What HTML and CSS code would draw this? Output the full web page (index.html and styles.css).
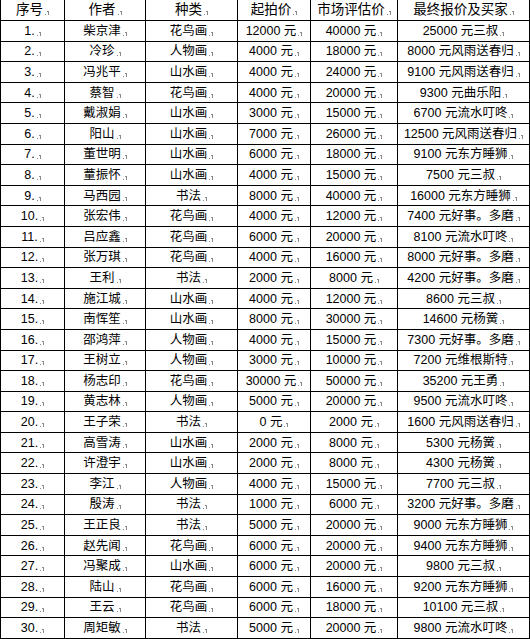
FILE: index.html
```html
<!DOCTYPE html>
<html lang="zh">
<head>
<meta charset="utf-8">
<title>拍卖结果</title>
<link rel="stylesheet" href="styles.css">
</head>
<body>
<div class="sheet">
<div class="cell head">序号<i class="pm"></i></div><div class="cell head">作者<i class="pm"></i></div><div class="cell head">种类<i class="pm"></i></div><div class="cell head">起拍价<i class="pm"></i></div><div class="cell head">市场评估价<i class="pm"></i></div><div class="cell head">最终报价及买家<i class="pm"></i></div>
<div class="cell">1.<i class="pm"></i></div><div class="cell">柴京津<i class="pm"></i></div><div class="cell">花鸟画<i class="pm"></i></div><div class="cell">12000 元<i class="pm"></i></div><div class="cell">40000 元<i class="pm"></i></div><div class="cell">25000 元三叔<i class="pm"></i></div>
<div class="cell">2.<i class="pm"></i></div><div class="cell">冷珍<i class="pm"></i></div><div class="cell">人物画<i class="pm"></i></div><div class="cell">4000 元<i class="pm"></i></div><div class="cell">18000 元<i class="pm"></i></div><div class="cell">8000 元风雨送春归<i class="pm"></i></div>
<div class="cell">3.<i class="pm"></i></div><div class="cell">冯兆平<i class="pm"></i></div><div class="cell">山水画<i class="pm"></i></div><div class="cell">4000 元<i class="pm"></i></div><div class="cell">24000 元<i class="pm"></i></div><div class="cell">9100 元风雨送春归<i class="pm"></i></div>
<div class="cell">4.<i class="pm"></i></div><div class="cell">蔡智<i class="pm"></i></div><div class="cell">花鸟画<i class="pm"></i></div><div class="cell">4000 元<i class="pm"></i></div><div class="cell">20000 元<i class="pm"></i></div><div class="cell">9300 元曲乐阳<i class="pm"></i></div>
<div class="cell">5.<i class="pm"></i></div><div class="cell">戴淑娟<i class="pm"></i></div><div class="cell">山水画<i class="pm"></i></div><div class="cell">3000 元<i class="pm"></i></div><div class="cell">15000 元<i class="pm"></i></div><div class="cell">6700 元流水叮咚<i class="pm"></i></div>
<div class="cell">6.<i class="pm"></i></div><div class="cell">阳山<i class="pm"></i></div><div class="cell">山水画<i class="pm"></i></div><div class="cell">7000 元<i class="pm"></i></div><div class="cell">26000 元<i class="pm"></i></div><div class="cell">12500 元风雨送春归<i class="pm"></i></div>
<div class="cell">7.<i class="pm"></i></div><div class="cell">董世明<i class="pm"></i></div><div class="cell">山水画<i class="pm"></i></div><div class="cell">6000 元<i class="pm"></i></div><div class="cell">18000 元<i class="pm"></i></div><div class="cell">9100 元东方睡狮<i class="pm"></i></div>
<div class="cell">8.<i class="pm"></i></div><div class="cell">蕫振怀<i class="pm"></i></div><div class="cell">山水画<i class="pm"></i></div><div class="cell">4000 元<i class="pm"></i></div><div class="cell">15000 元<i class="pm"></i></div><div class="cell">7500 元三叔<i class="pm"></i></div>
<div class="cell">9.<i class="pm"></i></div><div class="cell">马西园<i class="pm"></i></div><div class="cell">书法<i class="pm"></i></div><div class="cell">8000 元<i class="pm"></i></div><div class="cell">40000 元<i class="pm"></i></div><div class="cell">16000 元东方睡狮<i class="pm"></i></div>
<div class="cell">10.<i class="pm"></i></div><div class="cell">张宏伟<i class="pm"></i></div><div class="cell">花鸟画<i class="pm"></i></div><div class="cell">4000 元<i class="pm"></i></div><div class="cell">12000 元<i class="pm"></i></div><div class="cell">7400 元好事。多磨<i class="pm"></i></div>
<div class="cell">11.<i class="pm"></i></div><div class="cell">吕应鑫<i class="pm"></i></div><div class="cell">花鸟画<i class="pm"></i></div><div class="cell">6000 元<i class="pm"></i></div><div class="cell">20000 元<i class="pm"></i></div><div class="cell">8100 元流水叮咚<i class="pm"></i></div>
<div class="cell">12.<i class="pm"></i></div><div class="cell">张万琪<i class="pm"></i></div><div class="cell">花鸟画<i class="pm"></i></div><div class="cell">4000 元<i class="pm"></i></div><div class="cell">16000 元<i class="pm"></i></div><div class="cell">8000 元好事。多磨<i class="pm"></i></div>
<div class="cell">13.<i class="pm"></i></div><div class="cell">王利<i class="pm"></i></div><div class="cell">书法<i class="pm"></i></div><div class="cell">2000 元<i class="pm"></i></div><div class="cell">8000 元<i class="pm"></i></div><div class="cell">4200 元好事。多磨<i class="pm"></i></div>
<div class="cell">14.<i class="pm"></i></div><div class="cell">施江城<i class="pm"></i></div><div class="cell">山水画<i class="pm"></i></div><div class="cell">4000 元<i class="pm"></i></div><div class="cell">12000 元<i class="pm"></i></div><div class="cell">8600 元三叔<i class="pm"></i></div>
<div class="cell">15.<i class="pm"></i></div><div class="cell">南恽笙<i class="pm"></i></div><div class="cell">山水画<i class="pm"></i></div><div class="cell">8000 元<i class="pm"></i></div><div class="cell">30000 元<i class="pm"></i></div><div class="cell">14600 元杨黉<i class="pm"></i></div>
<div class="cell">16.<i class="pm"></i></div><div class="cell">邵鸿萍<i class="pm"></i></div><div class="cell">人物画<i class="pm"></i></div><div class="cell">4000 元<i class="pm"></i></div><div class="cell">15000 元<i class="pm"></i></div><div class="cell">7300 元好事。多磨<i class="pm"></i></div>
<div class="cell">17.<i class="pm"></i></div><div class="cell">王树立<i class="pm"></i></div><div class="cell">人物画<i class="pm"></i></div><div class="cell">3000 元<i class="pm"></i></div><div class="cell">10000 元<i class="pm"></i></div><div class="cell">7200 元维根斯特<i class="pm"></i></div>
<div class="cell">18.<i class="pm"></i></div><div class="cell">杨志印<i class="pm"></i></div><div class="cell">花鸟画<i class="pm"></i></div><div class="cell">30000 元<i class="pm"></i></div><div class="cell">50000 元<i class="pm"></i></div><div class="cell">35200 元王勇<i class="pm"></i></div>
<div class="cell">19.<i class="pm"></i></div><div class="cell">黄志林<i class="pm"></i></div><div class="cell">人物画<i class="pm"></i></div><div class="cell">5000 元<i class="pm"></i></div><div class="cell">20000 元<i class="pm"></i></div><div class="cell">9500 元流水叮咚<i class="pm"></i></div>
<div class="cell">20.<i class="pm"></i></div><div class="cell">王子荣<i class="pm"></i></div><div class="cell">书法<i class="pm"></i></div><div class="cell">0 元<i class="pm"></i></div><div class="cell">2000 元<i class="pm"></i></div><div class="cell">1600 元风雨送春归<i class="pm"></i></div>
<div class="cell">21.<i class="pm"></i></div><div class="cell">高雪涛<i class="pm"></i></div><div class="cell">山水画<i class="pm"></i></div><div class="cell">2000 元<i class="pm"></i></div><div class="cell">8000 元<i class="pm"></i></div><div class="cell">5300 元杨黉<i class="pm"></i></div>
<div class="cell">22.<i class="pm"></i></div><div class="cell">许澄宇<i class="pm"></i></div><div class="cell">山水画<i class="pm"></i></div><div class="cell">2000 元<i class="pm"></i></div><div class="cell">8000 元<i class="pm"></i></div><div class="cell">4300 元杨黉<i class="pm"></i></div>
<div class="cell">23.<i class="pm"></i></div><div class="cell">李江<i class="pm"></i></div><div class="cell">人物画<i class="pm"></i></div><div class="cell">4000 元<i class="pm"></i></div><div class="cell">15000 元<i class="pm"></i></div><div class="cell">7700 元三叔<i class="pm"></i></div>
<div class="cell">24.<i class="pm"></i></div><div class="cell">殷涛<i class="pm"></i></div><div class="cell">书法<i class="pm"></i></div><div class="cell">1000 元<i class="pm"></i></div><div class="cell">6000 元<i class="pm"></i></div><div class="cell">3200 元好事。多磨<i class="pm"></i></div>
<div class="cell">25.<i class="pm"></i></div><div class="cell">王正良<i class="pm"></i></div><div class="cell">书法<i class="pm"></i></div><div class="cell">5000 元<i class="pm"></i></div><div class="cell">20000 元<i class="pm"></i></div><div class="cell">9000 元东方睡狮<i class="pm"></i></div>
<div class="cell">26.<i class="pm"></i></div><div class="cell">赵先闻<i class="pm"></i></div><div class="cell">花鸟画<i class="pm"></i></div><div class="cell">6000 元<i class="pm"></i></div><div class="cell">20000 元<i class="pm"></i></div><div class="cell">9400 元东方睡狮<i class="pm"></i></div>
<div class="cell">27.<i class="pm"></i></div><div class="cell">冯聚成<i class="pm"></i></div><div class="cell">山水画<i class="pm"></i></div><div class="cell">6000 元<i class="pm"></i></div><div class="cell">20000 元<i class="pm"></i></div><div class="cell">9800 元三叔<i class="pm"></i></div>
<div class="cell">28.<i class="pm"></i></div><div class="cell">陆山<i class="pm"></i></div><div class="cell">花鸟画<i class="pm"></i></div><div class="cell">6000 元<i class="pm"></i></div><div class="cell">16000 元<i class="pm"></i></div><div class="cell">9200 元东方睡狮<i class="pm"></i></div>
<div class="cell">29.<i class="pm"></i></div><div class="cell">王云<i class="pm"></i></div><div class="cell">花鸟画<i class="pm"></i></div><div class="cell">6000 元<i class="pm"></i></div><div class="cell">18000 元<i class="pm"></i></div><div class="cell">10100 元三叔<i class="pm"></i></div>
<div class="cell">30.<i class="pm"></i></div><div class="cell">周矩敏<i class="pm"></i></div><div class="cell">书法<i class="pm"></i></div><div class="cell">5000 元<i class="pm"></i></div><div class="cell">20000 元<i class="pm"></i></div><div class="cell">9800 元流水叮咚<i class="pm"></i></div>
</div>
</body>
</html>
```
FILE: styles.css
```css
html, body {
  margin: 0;
  padding: 0;
  background: #fff;
}
.sheet {
  width: 530px;
  box-sizing: border-box;
  border-left: 1px solid #000;
  display: grid;
  grid-template-columns: 64px 81px 92px 73px 87px 132px;
  grid-template-rows: 21px repeat(30, 20.6px);
  font-family: "Liberation Sans", "Noto Sans CJK SC", sans-serif;
  font-size: 12.5px;
  color: #000;
}
.cell {
  box-sizing: border-box;
  border-right: 1px solid #000;
  border-bottom: 1px solid #000;
  display: flex;
  align-items: center;
  justify-content: center;
  white-space: nowrap;
  overflow: hidden;
  line-height: 14px;
}
.cell.head {
  font-size: 13.5px;
}
.pm {
  position: relative;
  display: block;
  width: 4px;
  height: 4px;
  margin-left: 2px;
  margin-top: 6px;
}
.pm::before {
  content: "";
  position: absolute;
  left: 0;
  bottom: 0;
  width: 1px;
  height: 1px;
  background: #8a8a8a;
}
.pm::after {
  content: "";
  position: absolute;
  right: 0;
  top: 0;
  width: 2px;
  height: 4px;
  border-top: 1px solid #8a8a8a;
  box-sizing: border-box;
  background: linear-gradient(#8a8a8a, #8a8a8a) right / 1px 100% no-repeat;
}
```
